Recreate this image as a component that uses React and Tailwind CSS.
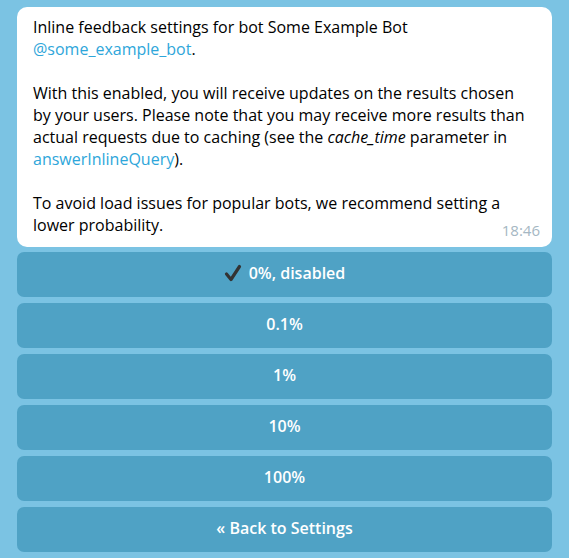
import React from "react";

const buttons = [
  { label: "0%, disabled", checked: true },
  { label: "0.1%" },
  { label: "1%" },
  { label: "10%" },
  { label: "100%" },
  { label: "« Back to Settings" },
];

function Check() {
  return (
    <svg width="18" height="18" viewBox="0 0 18 18" className="shrink-0">
      <path
        d="M2.5 10 L7 15.5 L15.5 2.5"
        fill="none"
        stroke="#333333"
        strokeWidth="3.2"
        strokeLinecap="round"
        strokeLinejoin="round"
      />
    </svg>
  );
}

export default function App() {
  return (
    <div
      className="min-h-[558px] w-[569px] bg-[#7bc3e3] px-[17px] pt-[7px] pb-[6px] flex flex-col"
      style={{ fontFamily: '"Open Sans", "Noto Sans", sans-serif' }}
    >
      {/* Message bubble */}
      <div className="bg-white rounded-[10px] pl-4 pr-[24px] pt-[9px] pb-[8px] text-[16px] leading-[22px] text-black">
        <p>
          Inline feedback settings for bot Some Example Bot{" "}
          <a className="text-[#2ea6da]">@some_example_bot</a>.
        </p>
        <p className="mt-[22px]">
          With this enabled, you will receive updates on the results chosen by
          your users. Please note that you may receive more results than actual
          requests due to caching (see the <em>cache_time</em> parameter in{" "}
          <a className="text-[#2ea6da]">answerInlineQuery</a>).
        </p>
        <p className="mt-[22px]">
          To avoid load issues for popular bots, we recommend setting a lower
          probability.
        </p>
        <div className="flex justify-end -mt-[15px] -mr-[12px]">
          <span className="text-[15px] leading-[18px] text-[#a5b7c3]">18:46</span>
        </div>
      </div>

      {/* Inline keyboard */}
      <div className="flex flex-col gap-[6px] mt-[5px]">
        {buttons.map((b) => (
          <button
            key={b.label}
            className="h-[45px] rounded-[7px] bg-[#4fa2c5] text-white text-[16px] font-semibold flex items-center justify-center gap-[7px] pb-[3px]"
          >
            {b.checked && <Check />}
            {b.label}
          </button>
        ))}
      </div>
    </div>
  );
}
